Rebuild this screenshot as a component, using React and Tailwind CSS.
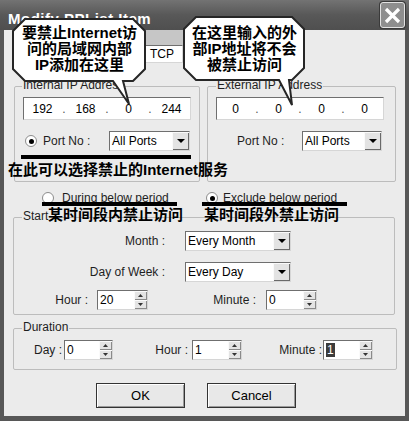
import { Fragment } from 'react';

const sunken = 'border border-t-[#6f6f6f] border-l-[#6f6f6f] border-r-[#d6d6d6] border-b-[#d6d6d6] bg-white';

function Radio({ on }) {
  return (
    <span className="flex h-[12px] w-[12px] shrink-0 items-center justify-center rounded-full border border-[#8c8c8c] bg-white">
      {on && <span className="h-[5px] w-[5px] rounded-full bg-black" />}
    </span>
  );
}

function Combo({ value, className }) {
  return (
    <div className={`flex h-[20px] items-stretch ${sunken} ${className}`}>
      <span className="flex flex-1 items-center pl-[2px] text-[12px] text-black">{value}</span>
      <span className="flex w-[17px] items-center justify-center bg-[#e3e3e3] shadow-[inset_1px_1px_0_#fafafa,inset_-1px_-1px_0_#6a6a6a]">
        <svg width="8" height="4" viewBox="0 0 8 4">
          <path d="M0 0h8L4 4z" fill="#000" />
        </svg>
      </span>
    </div>
  );
}

function Spin({ value, className, sel }) {
  return (
    <div className={`flex h-[20px] items-stretch ${sunken} ${className}`}>
      <span className="flex flex-1 items-center pl-[2px] text-[12px] text-black">
        {sel ? <span className="bg-[#3c3c3c] px-[1px] leading-[14px] text-white">{value}</span> : value}
      </span>
      <span className="flex w-[13px] flex-col">
        <span className="flex flex-1 items-center justify-center bg-[#e4e4e4] shadow-[inset_1px_1px_0_#fafafa,inset_-1px_-1px_0_#8a8a8a]">
          <svg width="5" height="3" viewBox="0 0 5 3">
            <path d="M0 3h5L2.5 0z" fill="#333" />
          </svg>
        </span>
        <span className="flex flex-1 items-center justify-center bg-[#e4e4e4] shadow-[inset_1px_1px_0_#fafafa,inset_-1px_-1px_0_#8a8a8a]">
          <svg width="5" height="3" viewBox="0 0 5 3">
            <path d="M0 0h5L2.5 3z" fill="#333" />
          </svg>
        </span>
      </span>
    </div>
  );
}

function IpField({ parts, className }) {
  return (
    <div className={`flex h-[23px] w-[168px] items-center text-[12px] text-black ${sunken} ${className}`}>
      {parts.map((p, i) => (
        <Fragment key={i}>
          <span className="flex-1 text-center">{p}</span>
          {i < 3 && <span className="w-[6px] text-center text-[#555]">.</span>}
        </Fragment>
      ))}
    </div>
  );
}

function Legend({ children, className }) {
  return (
    <div className={`-mt-[9px] w-fit bg-[#ebebeb] px-[1px] leading-[14px] ${className}`}>{children}</div>
  );
}

export default function App() {
  return (
    <div className="relative flex h-[421px] w-[409px] flex-col overflow-hidden bg-[#575757] font-['Liberation_Sans','Noto_Sans_CJK_SC',sans-serif] text-[12px] text-[#1e1e1e]">
      {/* title bar */}
      <div className="flex h-[30px] items-center bg-gradient-to-b from-[#737373] via-[#585858] to-[#4f4f4f] pl-[8px] pr-[4px]">
        <span className="pt-[8px] text-[15px] font-bold tracking-[0.5px] text-white">Modify PPList Item</span>
        <span className="ml-auto flex h-[26px] w-[25px] items-center justify-center rounded-[3px] border border-[#e2e2e2] bg-[#8e8e8e] shadow-[0_0_0_1px_#3a3a3a]">
          <svg width="17" height="17" viewBox="0 0 17 17">
            <path d="M2 2L15 15M15 2L2 15" stroke="#fff" strokeWidth="3.2" />
          </svg>
        </span>
      </div>

      {/* client area */}
      <div className="mx-[4px] flex h-[386px] flex-col bg-[#ebebeb]">
        <div className="flex h-[56px] flex-col pl-[141px]">
          <div className="h-[15px] w-[38px] bg-[#c6c6c6]" />
          <div className={`flex h-[18px] w-[38px] items-center pl-[4px] text-[12px] text-black ${sunken}`}>TCP</div>
        </div>

        <div className="flex gap-[7px] pl-[10px]">
          <div className="flex h-[96px] w-[186px] flex-col rounded-[2px] border border-[#bcbcbc]">
            <Legend className="ml-[7px]">Internal IP Address</Legend>
            <IpField parts={['192', '168', '0', '244']} className="ml-[8px] mt-[5px]" />
            <div className="mt-[11px] flex items-center">
              <span className="ml-[10px]"><Radio on /></span>
              <span className="ml-[6px] w-[66px]">Port No :</span>
              <Combo value="All Ports" className="w-[81px]" />
            </div>
          </div>
          <div className="flex h-[96px] w-[189px] flex-col rounded-[2px] border border-[#bcbcbc]">
            <Legend className="ml-[8px]">External IP Address</Legend>
            <IpField parts={['0', '0', '0', '0']} className="ml-[8px] mt-[5px]" />
            <div className="mt-[11px] flex items-center">
              <span className="ml-[29px] w-[65px]">Port No :</span>
              <Combo value="All Ports" className="w-[80px]" />
            </div>
          </div>
        </div>

        <div className="mt-[9px] flex h-[14px] items-center pl-[38px]">
          <Radio />
          <span className="ml-[8px] w-[144px]">During below period</span>
          <Radio on />
          <span className="ml-[5px]">Exclude below period</span>
        </div>

        <div className="ml-[9px] mt-[12px] flex h-[98px] w-[382px] flex-col rounded-[2px] border border-[#bcbcbc]">
          <Legend className="ml-[8px]">Start</Legend>
          <div className="mt-[8px] flex items-center">
            <span className="w-[151px] text-right">Month :</span>
            <Combo value="Every Month" className="ml-[20px] h-[19px] w-[106px]" />
          </div>
          <div className="mt-[11px] flex items-center">
            <span className="w-[151px] text-right">Day of Week :</span>
            <Combo value="Every Day" className="ml-[20px] h-[19px] w-[106px]" />
          </div>
          <div className="mt-[8px] flex items-center">
            <span className="w-[74px] text-right">Hour :</span>
            <Spin value="20" className="ml-[9px] h-[19px] w-[51px]" />
            <span className="w-[108px] text-right">Minute :</span>
            <Spin value="0" className="ml-[10px] h-[19px] w-[51px]" />
          </div>
        </div>

        <div className="ml-[9px] mt-[13px] flex h-[42px] w-[384px] flex-col rounded-[2px] border border-[#bcbcbc]">
          <Legend className="ml-[8px]">Duration</Legend>
          <div className="mt-[6px] flex items-center">
            <span className="w-[48px] text-right">Day :</span>
            <Spin value="0" className="ml-[2px] w-[49px]" />
            <span className="w-[75px] text-right">Hour :</span>
            <Spin value="1" className="ml-[4px] w-[50px]" />
            <span className="w-[80px] text-right">Minute :</span>
            <Spin value="1" sel className="ml-[1px] w-[50px]" />
          </div>
        </div>

        <div className="ml-[92px] mt-[13px] flex gap-[22px]">
          <button className="flex h-[25px] w-[89px] items-center justify-center border border-[#333] bg-[#e8e8e8] text-[13px] text-black shadow-[inset_1px_1px_0_#fff,inset_-1px_-1px_0_#9a9a9a]">OK</button>
          <button className="flex h-[25px] w-[89px] items-center justify-center border border-[#333] bg-[#e8e8e8] text-[13px] text-black shadow-[inset_1px_1px_0_#fff,inset_-1px_-1px_0_#9a9a9a]">Cancel</button>
        </div>
      </div>

      {/* annotations laid over the dialog */}
      <div className="absolute left-[21px] top-[155px] h-[4px] w-[170px] bg-black" />
      <div className="absolute left-[8px] top-[162px] text-[15px] font-bold leading-[16px] text-black">在此可以选择禁止的Internet服务</div>
      <div className="absolute left-[42px] top-[202px] h-[4px] w-[135px] bg-black" />
      <div className="absolute left-[202px] top-[202px] h-[4px] w-[145px] bg-black" />
      <div className="absolute left-[48px] top-[207px] text-[15px] font-bold leading-[16px] text-black">某时间段内禁止访问</div>
      <div className="absolute left-[204px] top-[207px] text-[15px] font-bold leading-[16px] text-black">某时间段外禁止访问</div>

      <div className="absolute left-[13px] top-[19px] h-[86px] w-[133px]">
        <svg className="absolute inset-0 overflow-visible" width="133" height="86" viewBox="0 0 133 86">
          <polygon points="12,0 120,0 132,12 132,50 120,62 110,62 116,85 100,62 12,62 0,50 0,12" fill="#fff" stroke="#262626" strokeWidth="2" />
        </svg>
        <div className="relative flex h-[62px] flex-col items-center justify-center pb-[3px] text-[15px] font-bold leading-[16px] text-black">
          <span>要禁止Internet访</span>
          <span>问的局域网内部</span>
          <span>IP添加在这里</span>
        </div>
      </div>

      <div className="absolute left-[184px] top-[17px] h-[89px] w-[121px]">
        <svg className="absolute inset-0 overflow-visible" width="121" height="89" viewBox="0 0 121 89">
          <polygon points="12,0 108,0 120,12 120,51 108,63 105,63 108,88 95,63 12,63 0,51 0,12" fill="#fff" stroke="#262626" strokeWidth="2" />
        </svg>
        <div className="relative flex h-[63px] flex-col items-center justify-center text-[15px] font-bold leading-[16px] text-black">
          <span>在这里输入的外</span>
          <span>部IP地址将不会</span>
          <span>被禁止访问</span>
        </div>
      </div>
    </div>
  );
}
